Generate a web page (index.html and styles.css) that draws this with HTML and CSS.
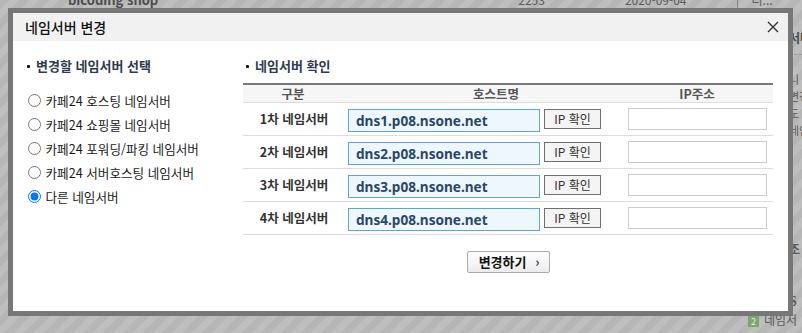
FILE: index.html
```html
<!DOCTYPE html>
<html lang="ko">
<head>
    <meta charset="UTF-8">
    <meta name="viewport" content="width=device-width, initial-scale=1.0">
    <title>네임서버 변경</title>
    <link rel="stylesheet" href="styles.css">
</head>
<body>
    <!-- page behind the dim layer -->
    <div class="page">
        <div class="page-top">
            <span class="shop">bicoding shop</span>
            <span class="num">2253</span>
            <span class="date">2020-09-04</span>
            <span class="more">더...</span>
        </div>
        <div class="page-side">
            <div class="side-title">서비</div>
            <div class="side-text">
                <div>니 니</div>
                <div>변경</div>
                <div>도</div>
                <div>네임</div>
            </div>
            <div class="side-jo">조</div>
            <div class="side-s">S</div>
        </div>
        <div class="page-foot"><span class="num-ico">2</span>네임서</div>
    </div>

    <div class="modal">
        <div class="modal-head">
            <h1 class="modal-title">네임서버 변경</h1>
            <button class="close" aria-label="닫기">
                <svg width="12" height="12" viewBox="0 0 12 12"><path d="M1 1L11 11M11 1L1 11" stroke="#333" stroke-width="1.4"/></svg>
            </button>
        </div>
        <div class="modal-body">
            <div class="col-left">
                <h2 class="sec-title">변경할 네임서버 선택</h2>
                <ul class="radio-list">
                    <li><label><input type="radio" name="ns"> 카페24 호스팅 네임서버</label></li>
                    <li><label><input type="radio" name="ns"> 카페24 쇼핑몰 네임서버</label></li>
                    <li><label><input type="radio" name="ns"> 카페24 포워딩/파킹 네임서버</label></li>
                    <li><label><input type="radio" name="ns"> 카페24 서버호스팅 네임서버</label></li>
                    <li><label><input type="radio" name="ns" checked> 다른 네임서버</label></li>
                </ul>
            </div>
            <div class="col-right">
                <h2 class="sec-title">네임서버 확인</h2>
                <div class="ns-table">
                    <div class="ns-head">
                        <div class="h-kind">구분</div>
                        <div class="h-host">호스트명</div>
                        <div class="h-ip">IP주소</div>
                    </div>
                    <div class="ns-row">
                        <div class="c-kind">1차 네임서버</div>
                        <input class="host" type="text" value="dns1.p08.nsone.net">
                        <button class="ip-btn">IP 확인</button>
                        <input class="ip" type="text">
                    </div>
                    <div class="ns-row">
                        <div class="c-kind">2차 네임서버</div>
                        <input class="host" type="text" value="dns2.p08.nsone.net">
                        <button class="ip-btn">IP 확인</button>
                        <input class="ip" type="text">
                    </div>
                    <div class="ns-row">
                        <div class="c-kind">3차 네임서버</div>
                        <input class="host" type="text" value="dns3.p08.nsone.net">
                        <button class="ip-btn">IP 확인</button>
                        <input class="ip" type="text">
                    </div>
                    <div class="ns-row">
                        <div class="c-kind">4차 네임서버</div>
                        <input class="host" type="text" value="dns4.p08.nsone.net">
                        <button class="ip-btn">IP 확인</button>
                        <input class="ip" type="text">
                    </div>
                </div>
                <div class="actions">
                    <button class="submit">변경하기 <span class="arr">›</span></button>
                </div>
            </div>
        </div>
    </div>
</body>
</html>
```

FILE: styles.css
```css
/* page */
body{
  margin: 0;
  width: 802px;
  height: 333px;
  overflow: hidden;
  position: relative;
  font-family: "Noto Sans CJK KR", "Noto Sans", sans-serif;
  background: repeating-linear-gradient(135deg, #b6b6b6 0 7px, #bebebe 7px 14px);
}
.page{
  color: #5a5a5a;
  font-size: 12px;
  line-height: 14px;
}
.page-top{
  display: flex;
  margin-top: -7px;
  height: 15px;
}
.shop{
  margin-left: 68px;
  font-weight: bold;
  font-size: 13px;
  color: #4c4c4c;
}
.num{
  margin-left: 360px;
}
.date{
  margin-left: 80px;
}
.more{
  margin-left: 50px;
  padding-left: 14px;
  border-left: 1px solid #888;
}
.page-side{
  margin-left: 789px;
  margin-top: 22px;
  white-space: nowrap;
  font-size: 12px;
}
.side-title{
  font-weight: bold;
  color: #4a4a4a;
  line-height: 16px;
  padding-bottom: 8px;
  border-bottom: 1px dashed #999;
}
.side-text{
  margin-top: 16px;
  font-size: 11px;
  line-height: 17px;
}
.side-jo{
  margin-top: 102px;
  font-weight: bold;
  line-height: 16px;
}
.side-s{
  margin-top: 38px;
  font-weight: bold;
  font-family: "Liberation Serif", serif;
  font-size: 14px;
  line-height: 14px;
}
.page-foot{
  margin-left: 748px;
  margin-top: 4px;
  font-size: 12px;
  line-height: 14px;
  white-space: nowrap;
}
.num-ico{
  display: inline-block;
  width: 11px;
  height: 11px;
  margin-right: 5px;
  background: #7aa86a;
  color: #e8e8e8;
  font-size: 9px;
  line-height: 11px;
  text-align: center;
}

/* modal */
.modal{
  position: absolute;
  left: 8px;
  top: 8px;
  width: 775px;
  height: 298px;
  border: 5px solid #777;
  background: #fff;
}
.modal-head{
  height: 28px;
  background: #f1f1f1;
  display: flex;
  align-items: center;
  justify-content: space-between;
  padding: 0 9px 0 12px;
}
.modal-title{
  margin: 0;
  font-size: 14px;
  font-weight: 500;
  color: #111;
  line-height: 17px;
}
.close{
  background: none;
  border: none;
  padding: 0;
  width: 12px;
  height: 12px;
  display: flex;
}
.modal-body{
  display: flex;
  padding: 17px 0 0 14px;
}
.col-left{
  width: 216px;
}
.col-right{
  width: 530px;
}
.sec-title{
  margin: 0;
  font-size: 13px;
  font-weight: bold;
  color: #2e3a4e;
  line-height: 16px;
  display: flex;
  align-items: center;
}
.sec-title::before{
  content: "";
  width: 3px;
  height: 3px;
  border-radius: 1px;
  background: #111;
  margin: 1px 6px 0 0;
}
.col-right .sec-title{
  padding-left: 3px;
}
.radio-list{
  list-style: none;
  margin: 14px 0 0;
  padding: 0;
}
.radio-list li{
  height: 24px;
  display: flex;
  align-items: center;
}
.radio-list label{
  display: flex;
  align-items: center;
  font-size: 12.6px;
  color: #1a1a1a;
  white-space: pre;
}
.radio-list input{
  width: 13px;
  height: 13px;
  margin: 0 1px 0 1px;
}

/* table */
.ns-table{
  margin-top: 9px;
  border-top: 2px solid #777;
}
.ns-head{
  display: flex;
  height: 17px;
  background: #f6f6f6;
  border-bottom: 1px solid #ddd;
  font-size: 12.5px;
  font-weight: bold;
  color: #555;
  line-height: 17px;
  text-align: center;
}
.h-kind{
  width: 100px;
}
.h-host{
  width: 306px;
}
.h-ip{
  flex: 1;
  padding-right: 28px;
}
.ns-row{
  display: flex;
  align-items: center;
  height: 32px;
  border-bottom: 1px solid #ddd;
}
.c-kind{
  width: 100px;
  padding-left: 1px;
  text-align: center;
  font-size: 12.5px;
  font-weight: bold;
  color: #333;
  margin-top: -1px;
}
.host{
  box-sizing: border-box;
  width: 192px;
  height: 23px;
  margin: 2px 0 0 4px;
  padding: 0 0 0 7px;
  border: 1px solid #5aa7d3;
  background: #edf7fd;
  font-family: "Noto Sans", sans-serif;
  font-size: 13.6px;
  font-weight: bold;
  color: #2b4767;
  outline: none;
}
.ip-btn{
  box-sizing: border-box;
  width: 57px;
  height: 20px;
  margin: 0 0 0 4px;
  padding: 0;
  border: 1px solid #707070;
  background: #f4f4f4;
  font-family: "Noto Sans CJK KR", sans-serif;
  font-size: 12px;
  color: #333;
  line-height: 18px;
}
.ip{
  box-sizing: border-box;
  width: 139px;
  height: 22px;
  margin: 0 0 0 27px;
  border: 1px solid #ccc;
  background: #fff;
  outline: none;
}

/* submit */
.actions{
  display: flex;
  justify-content: center;
  margin-top: 16px;
}
.submit{
  box-sizing: border-box;
  width: 83px;
  height: 22px;
  padding: 0 0 0 2px;
  border: 1px solid #aaa;
  border-radius: 2px;
  background: linear-gradient(#fff, #ececec);
  font-family: "Noto Sans CJK KR", sans-serif;
  font-size: 13px;
  font-weight: bold;
  color: #111;
  line-height: 20px;
}
.arr{
  margin-left: 5px;
  color: #2d3a5c;
  font-size: 13px;
}
```
